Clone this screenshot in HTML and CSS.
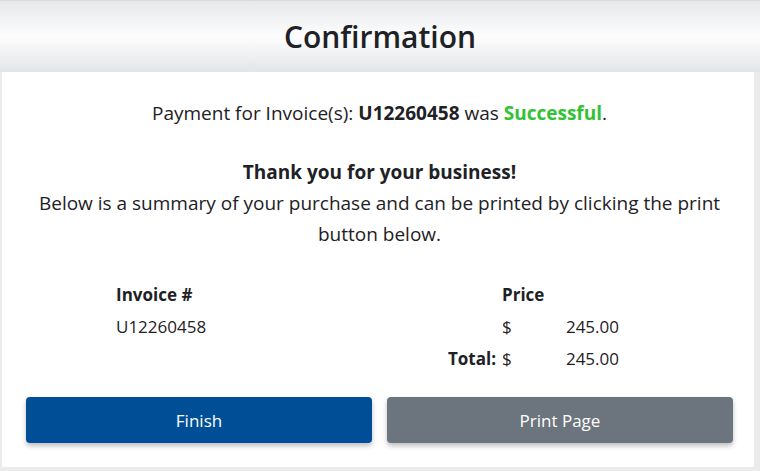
FILE: index.html
```html
<!DOCTYPE html>
<html lang="en">
<head>
    <meta charset="UTF-8">
    <meta name="viewport" content="width=device-width, initial-scale=1.0">
    <title>Confirmation</title>
    <link rel="stylesheet" href="styles.css">
</head>
<body>
    <div class="header">
        <h1>Confirmation</h1>
    </div>
    <div class="card">
        <p class="status">Payment for Invoice(s): <b>U12260458</b> was <b class="success">Successful</b>.</p>
        <div class="thanks">
            <p><b>Thank you for your business!</b></p>
            <p>Below is a summary of your purchase and can be printed by clicking the print button below.</p>
        </div>
        <div class="summary">
            <div class="th">Invoice #</div>
            <div class="th price-head">Price</div>
            <div>U12260458</div>
            <div>$</div>
            <div class="amount">245.00</div>
            <div class="total-label">Total:</div>
            <div>$</div>
            <div class="amount">245.00</div>
        </div>
        <div class="actions">
            <button type="button" class="button finish">Finish</button>
            <button type="button" class="button print" onclick="window.print()">Print Page</button>
        </div>
    </div>
</body>
</html>
```

FILE: styles.css
```css
body {
    font-family: "Open Sans", Arial, sans-serif;
    margin: 0;
    padding: 0;
    background-color: #ebebeb; /* fundo cinza claro */
    color: #1e2125;
}
.header {
    height: 72px;
    display: flex;
    align-items: center;
    justify-content: center;
    background: linear-gradient(to bottom, #e6e8eb 0%, #fdfdfd 50%, #e3e5e8 100%);
    border-top: 1px solid #dcdcdc;
    box-sizing: border-box;
}
h1 {
    margin: 0;
    font-size: 30px;
    font-weight: 600;
    color: #1e2125;
}
.card {
    margin: 0 6px 4px 2px;
    padding: 27px 21px 24px 24px;
    background-color: #ffffff;
    text-align: center;
    font-size: 19px;
}
p {
    margin: 0;
}
.status {
    line-height: 28px;
}
.success {
    color: #33c233;
}
.thanks {
    margin-top: 30px;
    line-height: 31px;
}
.summary {
    display: grid;
    grid-template-columns: 386px 60px 57px;
    grid-auto-rows: 32px;
    align-items: center;
    margin: 28px 0 23px 90px;
    text-align: left;
    font-size: 17px;
}
.th {
    font-weight: 700;
}
.price-head {
    grid-column: span 2;
}
.amount {
    text-align: right;
}
.total-label {
    font-weight: 700;
    text-align: right;
    padding-right: 6px;
}
.actions {
    display: grid;
    grid-template-columns: 1fr 1fr;
    gap: 15px;
}
.button {
    height: 46px;
    font-family: inherit;
    font-size: 17px;
    color: #ffffff;
    border: none;
    border-radius: 4px;
    cursor: pointer;
    box-shadow: 0 3px 5px rgba(0, 0, 0, 0.25);
}
.finish {
    background-color: #004e96;
}
.print {
    background-color: #6c747d;
}
```
